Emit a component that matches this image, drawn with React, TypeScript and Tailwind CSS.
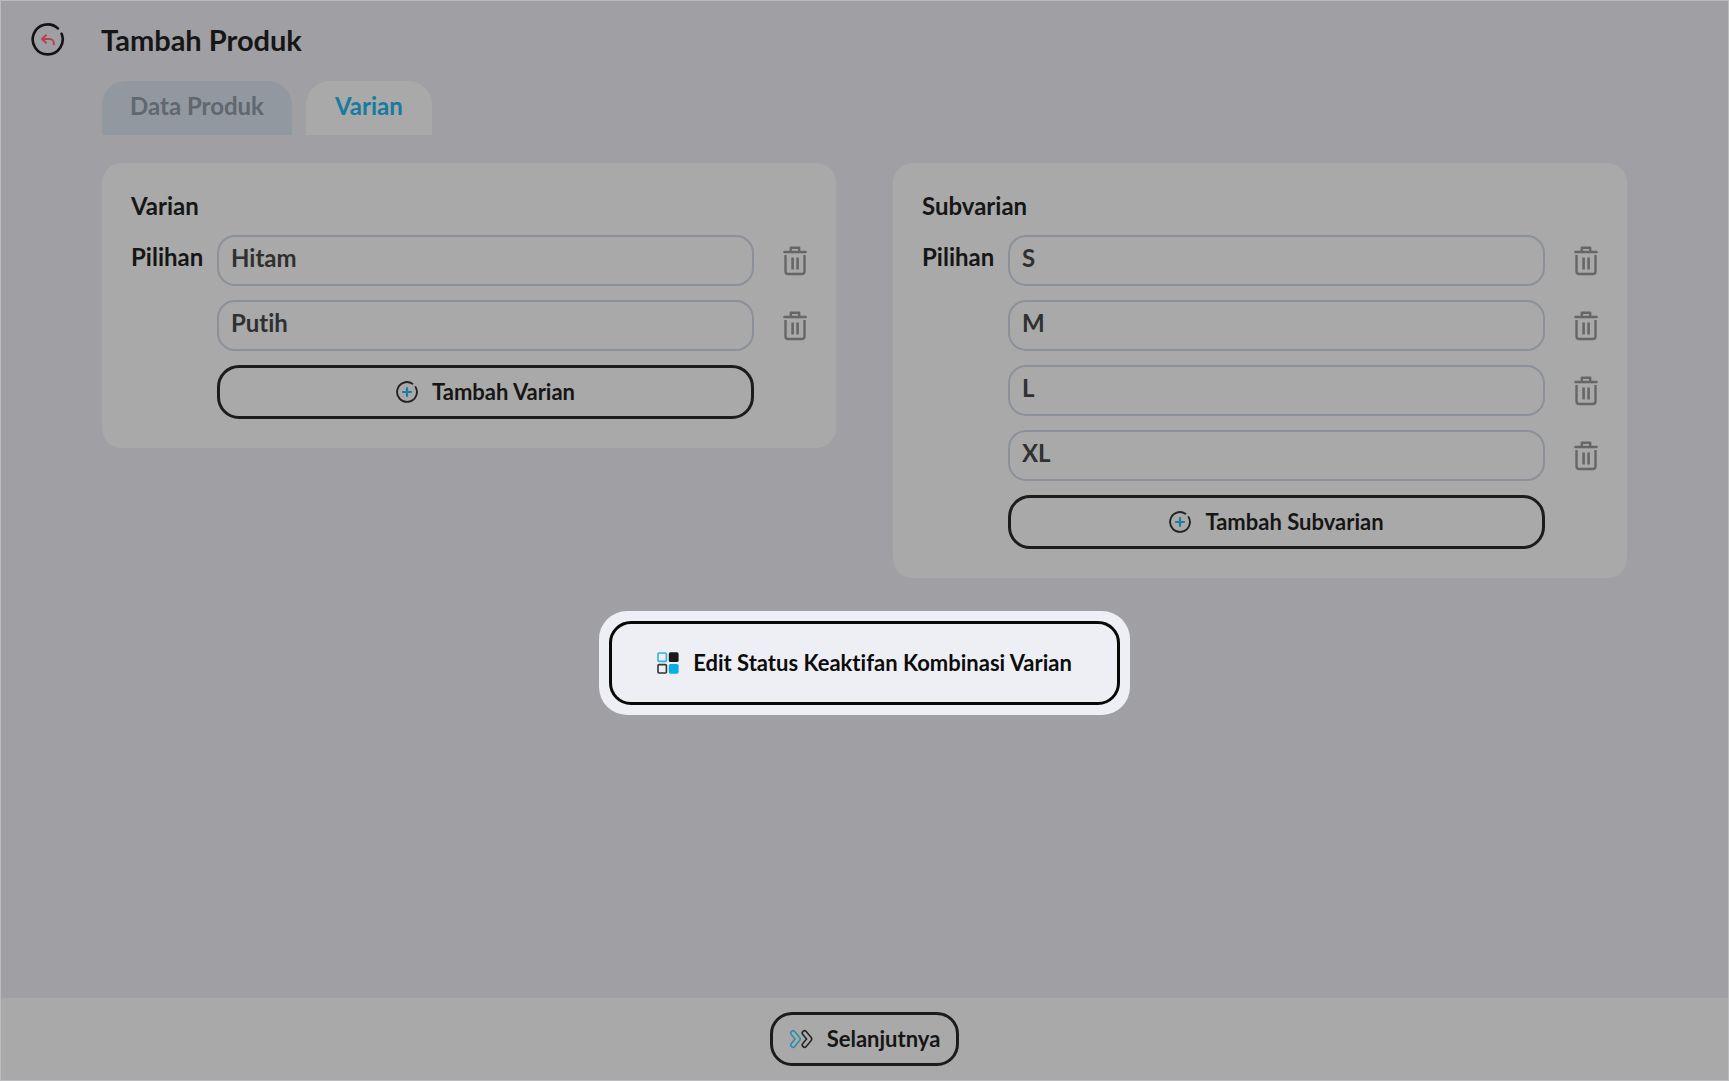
import React from 'react';

function BackIcon() {
  return (
    <svg viewBox="0 0 34 34" className="size-[34px]" fill="none" aria-hidden="true">
      <path d="M25.6 4.4A15 15 0 1 0 29.9 9.4" transform="rotate(6 17 17)" stroke="#131313" strokeWidth="2.6" strokeLinecap="round" />
      <path d="M15 12.2 11 16l4 3.8M11.4 16h7.2a4.2 4.2 0 0 1 4.2 4.2v1.2" stroke="#b34450" strokeWidth="1.9" strokeLinecap="round" strokeLinejoin="round" />
    </svg>
  );
}

function PlusIcon() {
  return (
    <svg viewBox="0 0 22 22" className="size-[22px]" fill="none" aria-hidden="true">
      <path d="M16.4 2.7A9.9 9.9 0 1 0 19.6 6.1" stroke="#222222" strokeWidth="1.9" strokeLinecap="round" />
      <path d="M11 7v8M7 11h8" stroke="#1b7fa3" strokeWidth="2.2" strokeLinecap="round" />
    </svg>
  );
}

function TrashIcon() {
  return (
    <svg viewBox="0 0 24 30" className="h-[30px] w-6" fill="none" stroke="#666666" strokeWidth="2.4" aria-hidden="true">
      <path d="M1.4 6h21.2" strokeLinecap="round" />
      <path d="M7.8 6V1.700h8.400V6" strokeLinejoin="round" />
      <path d="M2.500 9v16.200c0 1.800 1 2.800 2.800 2.800h13.400c1.800 0 2.800-1 2.800-2.800V9" />
      <path d="M9.600 11.500v12M14.600 11.500v12" strokeWidth="2.6" />
    </svg>
  );
}

function GridIcon() {
  return (
    <svg viewBox="0 0 22 22" className="size-[22px]" fill="none" aria-hidden="true">
      <rect x="1" y="1" width="8.4" height="8.4" rx="1" stroke="#2fb3e0" strokeWidth="1.6" />
      <rect x="11.8" y="0.3" width="9.8" height="9.8" rx="1.6" fill="#1a1a1a" />
      <rect x="1" y="12.6" width="8.4" height="8.4" rx="1" stroke="#333333" strokeWidth="1.6" />
      <rect x="11.8" y="11.9" width="9.8" height="9.8" rx="1.6" fill="#09aee2" />
    </svg>
  );
}

function NextIcon() {
  return (
    <svg viewBox="0 0 24 20" className="h-5 w-6" fill="none" strokeLinecap="round" strokeLinejoin="round" aria-hidden="true">
      <path d="M4 4 9 10 4 16" stroke="#2f8dae" strokeWidth="6" />
      <path d="M4 4 9 10 4 16" stroke="#a9a9a9" strokeWidth="2.8" />
      <path d="M15.500 4 20.500 10 15.500 16" stroke="#262626" strokeWidth="6" />
      <path d="M15.500 4 20.500 10 15.500 16" stroke="#a9a9a9" strokeWidth="2.8" />
    </svg>
  );
}

type OptionCardProps = {
  title: string;
  values: string[];
  addLabel: string;
};

function OptionCard({ title, values, addLabel }: OptionCardProps) {
  return (
    <section className="rounded-[20px] bg-[#a9a9a9] p-[29px]">
      <h2 className="leading-7">{title}</h2>
      <div className="mt-[15px] grid grid-cols-[86px_1fr_53px] gap-y-3.5">
        {values.map((value, i) => (
          <React.Fragment key={value}>
            {i === 0 ? (
              <label htmlFor={`${title}-0`} className="pt-2 leading-7">Pilihan</label>
            ) : (
              <span />
            )}
            <input
              id={`${title}-${i}`}
              aria-label={i === 0 ? undefined : `Pilihan ${i + 1}`}
              defaultValue={value}
              className="h-[51px] w-full rounded-[18px] border-2 border-[#8c9199] bg-transparent px-3 pb-1.5 text-[#303030] outline-none"
            />
            <button type="button" aria-label={`Hapus ${value}`} className="flex items-center justify-end">
              <TrashIcon />
            </button>
          </React.Fragment>
        ))}
        <button
          type="button"
          className="col-start-2 flex h-[54px] items-center justify-center gap-3.5 rounded-[22px] border-[3px] border-[#1c1c1c] text-[22px]"
        >
          <PlusIcon />
          {addLabel}
        </button>
      </div>
    </section>
  );
}

export default function App() {
  return (
    <div className="flex min-h-screen flex-col border border-[#bcbcbf] bg-[#a09fa4] font-['Lato',sans-serif] text-2xl font-bold text-[#161616] [font-variant-ligatures:none]">
      <header className="flex items-center pt-[21px] pl-[30px]">
        <button type="button" aria-label="Kembali">
          <BackIcon />
        </button>
        <h1 className="pl-9 text-[29px] leading-9">Tambah Produk</h1>
      </header>

      <main className="flex grow flex-col px-[101px] pt-[23px]">
        <div role="tablist" className="flex gap-3.5 leading-7">
          <button type="button" role="tab" aria-selected="false" className="rounded-t-3xl bg-[#92989f] px-7 pt-[11px] pb-[15px] text-[#60676f]">
            Data Produk
          </button>
          <button type="button" role="tab" aria-selected="true" className="rounded-t-3xl bg-[#a9a9a9] px-[29px] pt-[11px] pb-[15px] text-[#167b9f]">
            Varian
          </button>
        </div>

        <div className="mt-7 grid grid-cols-2 items-start gap-[57px]">
          <OptionCard title="Varian" values={['Hitam', 'Putih']} addLabel="Tambah Varian" />
          <OptionCard title="Subvarian" values={['S', 'M', 'L', 'XL']} addLabel="Tambah Subvarian" />
        </div>

        <div className="mt-[33px] self-center rounded-[28px] bg-[#eeeff5] p-2.5">
          <button type="button" className="flex h-[84px] items-center gap-3.5 rounded-[22px] border-[3px] border-[#090909] px-[45px] text-[22px] text-[#0c0c0c]">
            <GridIcon />
            Edit Status Keaktifan Kombinasi Varian
          </button>
        </div>
      </main>

      <footer className="flex justify-center bg-[#a9a9a9] py-3.5">
        <button type="button" className="flex h-[54px] items-center gap-3.5 rounded-[22px] border-[3px] border-[#1c1c1c] px-4 text-[22px]">
          <NextIcon />
          Selanjutnya
        </button>
      </footer>
    </div>
  );
}
